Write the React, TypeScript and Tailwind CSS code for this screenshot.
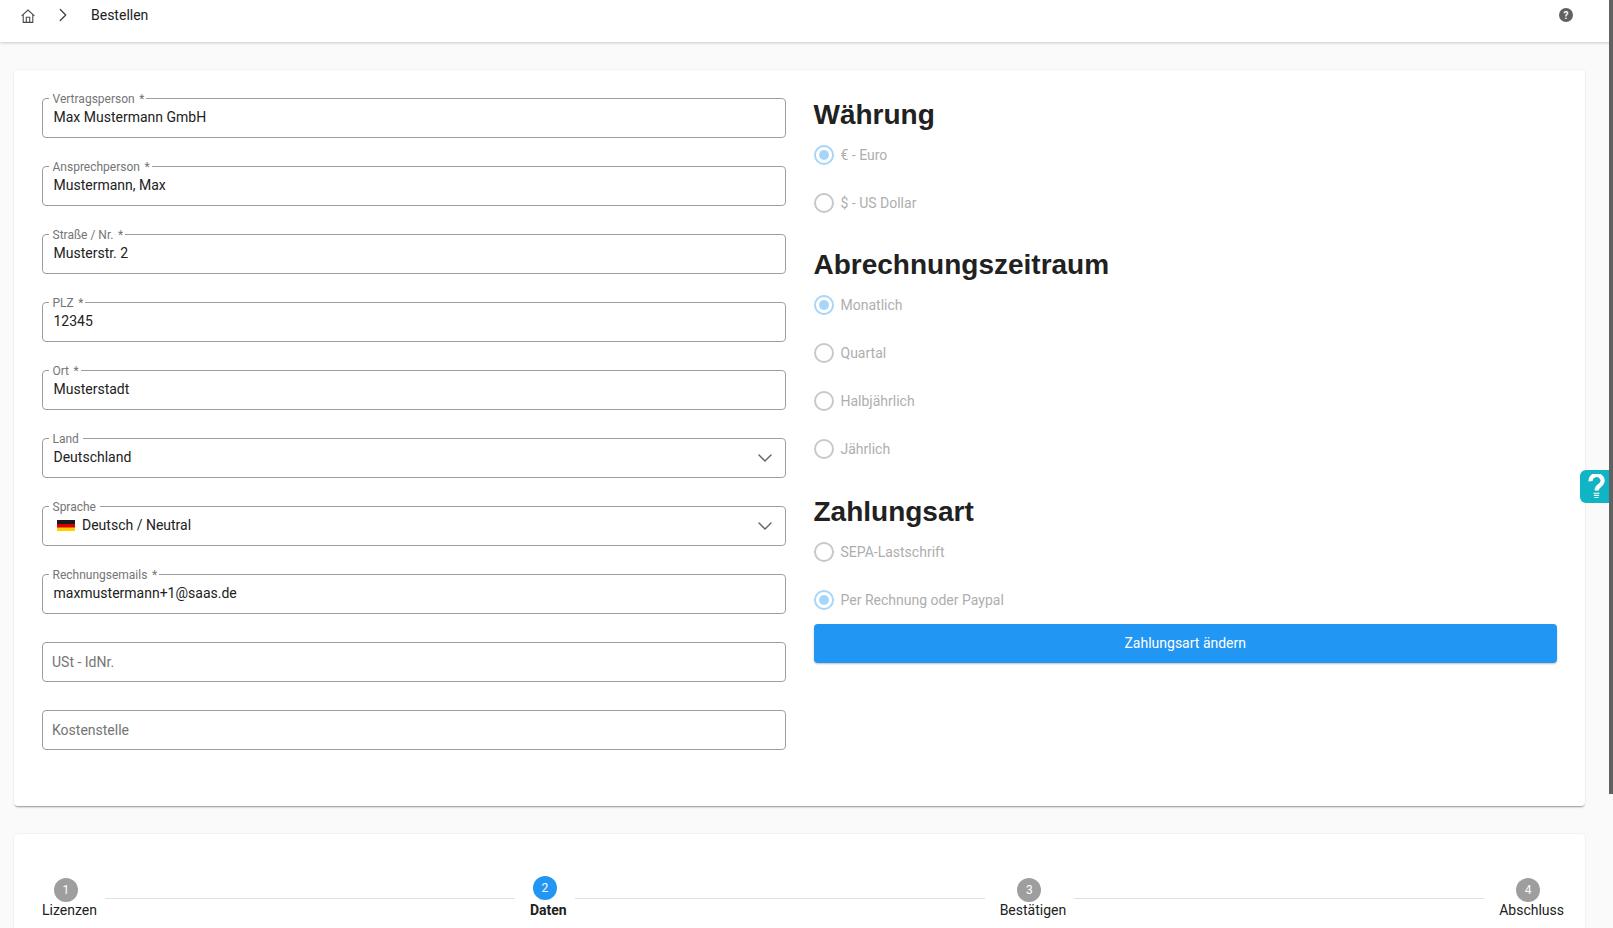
import { ChevronRight, ChevronDown } from "lucide-react";

function Field({ label, req, value, select, children }: { label?: string; req?: boolean; value?: string; select?: boolean; children?: React.ReactNode }) {
  return (
    <div className="relative h-10 rounded-[4px] border border-[#9e9e9e] mb-7 flex items-center pl-[10.5px] pr-2 text-[14px] text-[#212121]">
      {label && (
        <span className="absolute left-[6px] -top-[7px] bg-white pl-[3.5px] pr-[4px] whitespace-nowrap text-[12px] leading-[14px] text-[#757575]">
          {label}
          {req && <span className="ml-[4.5px] -mr-[2px]">*</span>}
        </span>
      )}
      <div className="flex-1 flex items-center -mt-[2px] leading-5">{children ?? value}</div>
      {select && <ChevronDown className="w-6 h-6 text-[#616161]" strokeWidth={1.4} />}
    </div>
  );
}

function Radio({ label, checked }: { label: string; checked?: boolean }) {
  return (
    <div className="h-6 flex items-center mb-6 last:mb-0 text-[14px] text-[#aeaeae]">
      <span className={"w-5 h-5 rounded-full border-2 flex items-center justify-center mr-[7px] " + (checked ? "border-[#a6d5fa]" : "border-[#c8c8c8]")}>
        {checked && <span className="w-[10px] h-[10px] rounded-full bg-[#a6d5fa]" />}
      </span>
      {label}
    </div>
  );
}

function Heading({ children }: { children: React.ReactNode }) {
  return <h2 className="text-[28px] leading-[34px] font-bold text-[#212121] font-['Liberation_Sans',sans-serif]">{children}</h2>;
}

function Step({ n, label, active }: { n: number; label: string; active?: boolean }) {
  return (
    <div className="flex flex-col items-center shrink-0">
      <span className={"w-6 h-6 mr-[7px] rounded-full flex items-center justify-center text-[12px] text-white " + (active ? "bg-[#2196f3] -mt-[2px] mb-[2px]" : "bg-[#9e9e9e]")}>{n}</span>
      <span className={"text-[14px] leading-5 -mt-[2px] text-[#212121] " + (active ? "font-bold" : "")}>{label}</span>
    </div>
  );
}

function Line() {
  return <div className="flex-1 h-px bg-[#e0e0e0] mt-[20px] ml-2 mr-[15px]" />;
}

export default function App() {
  return (
    <div className="relative h-[928px] overflow-hidden bg-[#fafafa] font-['Roboto',sans-serif]">
      <header className="h-[42px] bg-white shadow-[0_1px_3px_rgba(0,0,0,0.2)] flex items-start text-[14px] text-[#212121] pr-[40px]">
        <svg className="ml-[21px] mt-[9px]" width="14" height="14" viewBox="0 0 14 14" fill="none" stroke="#4a4a4a" strokeWidth="1.1">
          <path d="M0.6 6.8 7 1l6.4 5.8" />
          <path d="M2.2 5.8V13.4H11.8V5.8" />
          <path d="M5.3 13.4V8.2H8.7V13.4" />
        </svg>
        <ChevronRight className="w-[22px] h-[22px] ml-[17px] mt-[4px] text-[#424242]" strokeWidth={1.4} />
        <span className="ml-[17px] mt-[5px] leading-5">Bestellen</span>
        <span className="ml-auto mt-2 w-[14px] h-[14px] rounded-full bg-[#616161] text-white text-[10px] font-bold flex items-center justify-center">?</span>
      </header>

      <main className="pl-[14px] pr-[28px] pt-7">
        <section className="h-[736px] bg-white rounded-[4px] shadow-[0_2px_2px_-1px_rgba(0,0,0,0.4),0_0_2px_rgba(0,0,0,0.1)] p-7 grid grid-cols-2 gap-7">
          <div>
            <Field label="Vertragsperson" req value="Max Mustermann GmbH" />
            <Field label="Ansprechperson" req value="Mustermann, Max" />
            <Field label="Straße / Nr." req value="Musterstr. 2" />
            <Field label="PLZ" req value="12345" />
            <Field label="Ort" req value="Musterstadt" />
            <Field label="Land" value="Deutschland" select />
            <Field label="Sprache" select>
              <svg className="w-[18px] h-[11px] ml-[3.5px] mr-[7px]" viewBox="0 0 18 11">
                <rect width="18" height="4" fill="#1a1a1a" />
                <rect y="4" width="18" height="4" fill="#d80000" />
                <rect y="7.5" width="18" height="3.5" fill="#ffce00" />
              </svg>
              Deutsch / Neutral
            </Field>
            <Field label="Rechnungsemails" req value="maxmustermann+1@saas.de" />
            <Field>
              <span className="text-[#757575] mt-[2px] -ml-[1.5px]">USt - IdNr.</span>
            </Field>
            <Field>
              <span className="text-[#757575] mt-[2px] -ml-[1.5px]">Kostenstelle</span>
            </Field>
          </div>
          <div>
            <Heading>Währung</Heading>
            <div className="mt-[11px]">
              <Radio label="€ - Euro" checked />
              <Radio label="$ - US Dollar" />
            </div>
            <div className="mt-[33px]"><Heading>Abrechnungszeitraum</Heading></div>
            <div className="mt-[11px]">
              <Radio label="Monatlich" checked />
              <Radio label="Quartal" />
              <Radio label="Halbjährlich" />
              <Radio label="Jährlich" />
            </div>
            <div className="mt-[34px]"><Heading>Zahlungsart</Heading></div>
            <div className="mt-[11px]">
              <Radio label="SEPA-Lastschrift" />
              <Radio label="Per Rechnung oder Paypal" checked />
            </div>
            <button className="mt-3 w-full h-[39px] rounded-[4px] bg-[#2196f3] text-white text-[14px] shadow-[0_1px_2px_rgba(0,0,0,0.25)]">Zahlungsart ändern</button>
          </div>
        </section>

        <section className="mt-7 h-[200px] bg-white rounded-[4px] shadow-[0_0_2px_rgba(0,0,0,0.12)] pl-7 pr-[21px] pt-[44px] flex items-start">
          <Step n={1} label="Lizenzen" />
          <Line />
          <Step n={2} label="Daten" active />
          <Line />
          <Step n={3} label="Bestätigen" />
          <Line />
          <Step n={4} label="Abschluss" />
        </section>
      </main>

      <div className="absolute top-[470px] right-[4px] w-[29px] h-[33px] bg-[#0fb5c4] rounded-l-[6px] flex items-center justify-end pr-[4px]">
        <svg width="17" height="25" viewBox="0 0 17 25" fill="none" stroke="#fff">
          <path d="M2.6 7.2A6 5.6 0 1 1 12 11.2C9.6 12.8 8.6 13.6 8.6 16.5" strokeWidth="4.2" />
          <path d="M5.5 19.3h6M5.9 21.4h5.2M6.5 23.5h4" strokeWidth="1.1" />
        </svg>
      </div>

      <div className="absolute top-0 right-0 w-[4px] h-[794px] bg-[#616161]" />
    </div>
  );
}
